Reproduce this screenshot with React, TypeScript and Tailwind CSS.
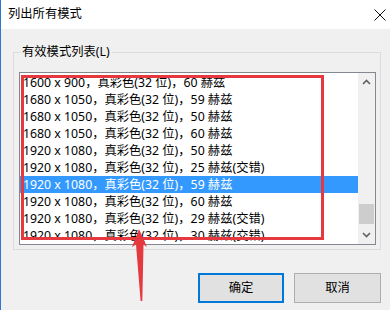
import React from 'react'

const MODES = [
  '1600 x 900，真彩色(32 位)，60 赫兹',
  '1680 x 1050，真彩色(32 位)，59 赫兹',
  '1680 x 1050，真彩色(32 位)，50 赫兹',
  '1680 x 1050，真彩色(32 位)，60 赫兹',
  '1920 x 1080，真彩色(32 位)，50 赫兹',
  '1920 x 1080，真彩色(32 位)，25 赫兹(交错)',
  '1920 x 1080，真彩色(32 位)，59 赫兹',
  '1920 x 1080，真彩色(32 位)，60 赫兹',
  '1920 x 1080，真彩色(32 位)，29 赫兹(交错)',
  '1920 x 1080，真彩色(32 位)，30 赫兹(交错)',
]

const SELECTED = 6

function Chevron({ up }: { up?: boolean }) {
  return (
    <svg width="9" height="6" viewBox="0 0 9 6" className="block">
      <path
        d={up ? 'M1 5 L4.5 1.5 L8 5' : 'M1 1 L4.5 4.5 L8 1'}
        fill="none"
        stroke="#606060"
        strokeWidth="1.6"
      />
    </svg>
  )
}

export default function App() {
  return (
    <div
      className="relative w-[390px] h-[310px] overflow-hidden bg-[#f0f0f0] border-l border-[#2b79d0] text-[12.3px] text-black"
      style={{ fontFamily: '"Noto Sans", "Noto Sans CJK SC", sans-serif' }}
    >
      {/* Title bar */}
      <div className="flex items-center justify-between h-[29px] bg-white pl-[7px] pr-[3px]">
        <span className="leading-none">列出所有模式</span>
        <svg width="12" height="12" viewBox="0 0 12 12" className="mr-[1px]">
          <path d="M0.5 0.5 L11.5 11.5 M11.5 0.5 L0.5 11.5" stroke="#111" strokeWidth="1" />
        </svg>
      </div>

      {/* Group box */}
      <div className="relative mt-[23px] ml-[12px] w-[368px] h-[198px] border border-[#dcdcdc] pt-[19px] pl-[5px]">
        <span className="absolute -top-[9px] left-[6px] bg-[#f0f0f0] px-[2px] leading-[16px]">
          有效模式列表(L)
        </span>

        {/* Listbox */}
        <div className="flex w-[357px] h-[173px] border border-[#828790] bg-white overflow-hidden">
          <div className="flex-1 overflow-hidden pt-[1px]">
            {MODES.map((m, i) => (
              <div
                key={i}
                className={`h-[17px] leading-[17px] pl-[3px] whitespace-nowrap ${
                  i === SELECTED ? 'bg-[#3399ff] text-white' : ''
                }`}
              >
                {m}
              </div>
            ))}
          </div>
          <div className="flex flex-col items-center justify-between w-[17px] bg-[#f0f0f0] py-[6px]">
            <Chevron up />
            <div className="flex-1 w-full flex flex-col justify-end pb-[8px] pt-[4px]">
              <div className="h-[20px] w-[15px] mx-auto bg-[#cdcdcd]" />
            </div>
            <Chevron />
          </div>
        </div>
      </div>

      {/* Buttons */}
      <div className="flex justify-end gap-[10px] mt-[23px] w-[380px]">
        <button className="w-[86px] h-[30px] bg-[#e1e1e1] border-2 border-[#0078d7] leading-none">
          确定
        </button>
        <button className="w-[87px] h-[30px] bg-[#e1e1e1] border border-[#adadad] leading-none">
          取消
        </button>
      </div>

      {/* Red annotation box */}
      <div className="absolute left-[20px] top-[75px] w-[303px] h-[165px] border-[3px] border-[#e5393f] pointer-events-none" />

      {/* Red annotation arrow */}
      <svg className="absolute left-0 top-0 pointer-events-none" width="390" height="310" viewBox="0 0 390 310">
        <polygon
          points="138,229 146,247 142.5,244.5 141.3,301 139.6,301 135,244.5 131,247"
          fill="#e5393f"
        />
      </svg>
    </div>
  )
}
